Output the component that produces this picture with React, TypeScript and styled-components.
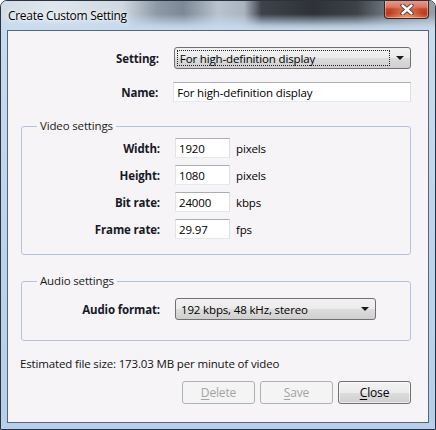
import React from 'react';
import styled, { createGlobalStyle } from 'styled-components';

const Global = createGlobalStyle`
  html, body { margin: 0; padding: 0; background: #ffffff; }
  body {
    width: 436px; height: 430px; overflow: hidden;
    font-family: "Open Sans", "Noto Sans", sans-serif;
    font-size: 11.5px;
    letter-spacing: -0.15px;
    color: #111;
  }
  * { box-sizing: border-box; }
`;

const Window = styled.div`
  width: 436px;
  height: 430px;
  border: 1px solid #2a333d;
  border-radius: 7px 7px 0 0;
  background: linear-gradient(to bottom, #c9dcf0 0%, #bcd3ec 60%, #b7cfea 100%);
  display: flex;
  flex-direction: column;
  padding: 0 6px 6px;
  overflow: hidden;
`;

const TitleBar = styled.div`
  height: 29px;
  margin: 0 -6px;
  padding: 0 7px 0 7px;
  display: flex;
  justify-content: space-between;
  align-items: flex-start;
  background:
    linear-gradient(to bottom, rgba(205, 222, 240, 0) 0%, rgba(205, 222, 240, 0) 45%, rgba(200, 218, 238, 0.85) 85%, #c6dbf0 100%),
    linear-gradient(to right, #d2dce6 0%, #dfe6ee 12%, #cfd8e2 28%, #8d99a6 36%, #7c8895 42%, #b9c3cf 50%, #aab4bf 56%, #3e434a 60%, #2e3238 72%, #3d4248 82%, #6a7078 88%, #9aa0a8 100%);
`;

const Title = styled.span`
  margin-top: 6px;
  font-size: 12px;
  letter-spacing: -0.3px;
  color: #000;
  text-shadow: 0 0 6px rgba(255, 255, 255, 0.95), 0 0 3px rgba(255, 255, 255, 0.9);
`;

const CloseButton = styled.div`
  width: 45px;
  height: 19px;
  margin-top: -1px;
  margin-right: -1px;
  border: 1px solid #3a2420;
  border-top: none;
  border-radius: 0 0 4px 4px;
  background:
    radial-gradient(ellipse at 50% 100%, rgba(255, 170, 110, 0.8) 0%, rgba(255, 150, 100, 0) 60%),
    linear-gradient(to bottom, #e6a293 0%, #d87563 40%, #c4472b 50%, #b93a20 75%, #d0603c 100%);
  box-shadow: inset 0 0 0 1px rgba(255, 220, 210, 0.45);
  display: flex;
  align-items: center;
  justify-content: center;
`;

const Client = styled.div`
  flex: 1;
  border: 1px solid #55657a;
  background: #f7f4f7;
  padding: 16px 17px 18px 13px;
  display: flex;
  flex-direction: column;
`;

const Row = styled.div<{ $mt?: number }>`
  display: flex;
  align-items: center;
  margin-top: ${p => p.$mt ?? 0}px;
`;

const Label = styled.label<{ $w: number }>`
  width: ${p => p.$w}px;
  margin-right: 15px;
  text-align: right;
  font-weight: 700;
  color: #151a28;
  white-space: nowrap;
`;

const TextBox = styled.div<{ $w: number }>`
  width: ${p => p.$w}px;
  height: 20px;
  background: #fff;
  border: 1px solid #abadb3;
  border-left-color: #e2e3ea;
  border-right-color: #dbdfe6;
  border-bottom-color: #e3e9ef;
  padding: 0 3px;
  display: flex;
  align-items: center;
  white-space: nowrap;
  color: #000;
`;

const Unit = styled.span`
  margin-left: 6px;
  color: #000;
`;

const Combo = styled.div<{ $w: number }>`
  width: ${p => p.$w}px;
  height: 22px;
  border: 1px solid #707070;
  border-radius: 3px;
  background: linear-gradient(to bottom, #f2f2f2 0%, #ebebeb 50%, #dddddd 50%, #cfcfcf 100%);
  display: flex;
  align-items: center;
  padding: 2px 6px 2px 2px;
  color: #000;
`;

const ComboText = styled.div<{ $focus?: boolean }>`
  flex: 1;
  height: 100%;
  display: flex;
  align-items: center;
  padding-left: 2px;
  white-space: nowrap;
  border: 1px dotted ${p => (p.$focus ? '#222' : 'transparent')};
`;

const Arrow = styled.span`
  width: 0;
  height: 0;
  margin-left: 6px;
  border-left: 4px solid transparent;
  border-right: 4px solid transparent;
  border-top: 4px solid #1a1a1a;
`;

const Group = styled.fieldset<{ $mt: number; $pt: number; $pb: number }>`
  margin: ${p => p.$mt}px 0 0 0;
  padding: ${p => p.$pt}px 0 ${p => p.$pb}px 0;
  border: 1px solid #b4c2de;
  border-radius: 3px;
  min-width: 0;
`;

const Legend = styled.legend`
  margin-left: 15px;
  padding: 0 3px;
  line-height: 16px;
  color: #1a1a1a;
`;

const VideoRows = styled.div`
  display: flex;
  flex-direction: column;
  gap: 7px;
`;

const Estimate = styled.div`
  margin-top: 15px;
  margin-left: -1px;
  line-height: 16px;
  color: #111;
`;

const Buttons = styled.div`
  margin-top: 9px;
  display: flex;
  justify-content: flex-end;
  gap: 5px;
`;

const Button = styled.div<{ $disabled?: boolean }>`
  width: 73px;
  height: 23px;
  border-radius: 3px;
  display: flex;
  align-items: center;
  justify-content: center;
  font-size: 12px;
  border: 1px solid ${p => (p.$disabled ? '#adb2b5' : '#707070')};
  color: ${p => (p.$disabled ? '#a3a3a3' : '#000')};
  background: ${p =>
    p.$disabled
      ? '#f4f4f4'
      : 'linear-gradient(to bottom, #f2f2f2 0%, #ebebeb 50%, #dddddd 50%, #cfcfcf 100%)'};
  box-shadow: ${p => (p.$disabled ? 'none' : 'inset 0 0 0 1px rgba(255,255,255,0.6)')};
  u { text-decoration: underline; text-underline-offset: 2px; }
`;

const CloseX = () => (
  <svg width="14" height="11" viewBox="0 0 14 11">
    <path d="M2.5 1.5 L11.5 9.5 M11.5 1.5 L2.5 9.5" stroke="#3a3a3a" strokeWidth="4.2" strokeLinecap="round" />
    <path d="M2.5 1.5 L11.5 9.5 M11.5 1.5 L2.5 9.5" stroke="#ffffff" strokeWidth="2.4" strokeLinecap="round" />
  </svg>
);

const videoRows = [
  { label: 'Width:', value: '1920', unit: 'pixels' },
  { label: 'Height:', value: '1080', unit: 'pixels' },
  { label: 'Bit rate:', value: '24000', unit: 'kbps' },
  { label: 'Frame rate:', value: '29.97', unit: 'fps' },
];

export default function App() {
  return (
    <>
      <Global />
      <Window>
        <TitleBar>
          <Title>Create Custom Setting</Title>
          <CloseButton>
            <CloseX />
          </CloseButton>
        </TitleBar>
        <Client>
          <Row>
            <Label $w={139}>Setting:</Label>
            <Combo $w={239}>
              <ComboText $focus>For high-definition display</ComboText>
              <Arrow />
            </Combo>
          </Row>
          <Row $mt={13}>
            <Label $w={139}>Name:</Label>
            <TextBox $w={241}>For high-definition display</TextBox>
          </Row>

          <Group $mt={16} $pt={4} $pb={15}>
            <Legend>Video settings</Legend>
            <VideoRows>
              {videoRows.map(r => (
                <Row key={r.label}>
                  <Label $w={138}>{r.label}</Label>
                  <TextBox $w={55}>{r.value}</TextBox>
                  <Unit>{r.unit}</Unit>
                </Row>
              ))}
            </VideoRows>
          </Group>

          <Group $mt={18} $pt={9} $pb={20}>
            <Legend>Audio settings</Legend>
            <Row>
              <Label $w={138}>Audio format:</Label>
              <Combo $w={201}>
                <ComboText>192 kbps, 48 kHz, stereo</ComboText>
                <Arrow />
              </Combo>
            </Row>
          </Group>

          <Estimate>Estimated file size: 173.03 MB per minute of video</Estimate>

          <Buttons>
            <Button $disabled><span><u>D</u>elete</span></Button>
            <Button $disabled><span><u>S</u>ave</span></Button>
            <Button><span><u>C</u>lose</span></Button>
          </Buttons>
        </Client>
      </Window>
    </>
  );
}
